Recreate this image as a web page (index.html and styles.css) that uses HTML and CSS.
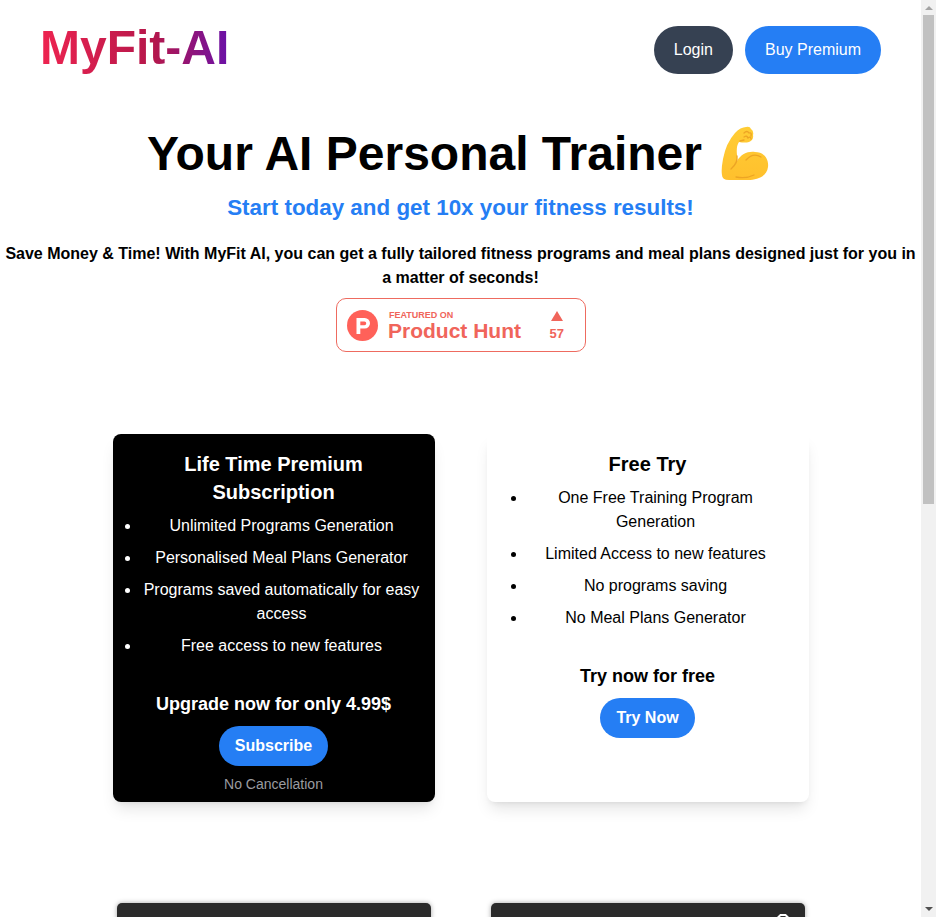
FILE: index.html
```html
<!DOCTYPE html>
<html lang="en">
<head>
<meta charset="utf-8">
<title>MyFit-AI</title>
<link rel="stylesheet" href="styles.css">
</head>
<body>
<div class="page">
  <header class="header">
    <div class="logo">MyFit-AI</div>
    <nav class="nav">
      <a class="pill pill-dark">Login</a>
      <a class="pill">Buy Premium</a>
    </nav>
  </header>
  <section class="hero">
    <h1><span>Your AI Personal Trainer</span>
      <svg class="muscle" viewBox="0 0 48 56" role="img" aria-label="Flexed biceps">
        <defs><linearGradient id="skin" x1="0" y1="0" x2="0" y2="1"><stop offset="0" stop-color="#ffcd35"/><stop offset="1" stop-color="#ffc02d"/></linearGradient></defs>
        <path fill="url(#skin)" d="M14 7C17 3 22 1 25 1Q29 0 30 3Q33 5 32 9Q33 14 28 16Q24 17 18 16Q15 20 16 29L16 35C20 28 27 25 34 26C43 26 48 33 47 41C46 50 37 54 27 54L8 54Q1 54 1 49Q0 44 2 33Q5 17 14 7Z"/>
        <path fill="none" stroke="#eda524" stroke-width="1.3" stroke-linecap="round" d="M23 7Q26 4 28 7Q31 6 30 10M23 11Q26 9 27 12Q30 10 30 13M19 15L23 14M16 30Q17 37 10 43M25 34Q32 26 40 31M15 51Q25 53 33 49"/>
      </svg>
    </h1>
    <h2>Start today and get 10x your fitness results!</h2>
    <p>Save Money &amp; Time! With MyFit AI, you can get a fully tailored fitness programs and meal plans designed just for you in a matter of seconds!</p>
    <a class="badge">
      <svg class="ph" viewBox="0 0 31 31"><circle cx="15.5" cy="15.5" r="15.5" fill="#ff6159"/><path fill="#fff" fill-rule="evenodd" d="M9.5 8h8.2a5.3 5.3 0 0 1 0 10.6h-4.4V24H9.5zm3.8 3.5v3.7h4.1a1.85 1.85 0 0 0 0-3.7z"/></svg>
      <span class="badge-text"><small>FEATURED ON</small><strong>Product Hunt</strong></span>
      <span class="votes"><i></i>57</span>
    </a>
  </section>
  <section class="plans">
    <article class="plan premium">
      <h3>Life Time Premium Subscription</h3>
      <ul>
        <li>Unlimited Programs Generation</li>
        <li>Personalised Meal Plans Generator</li>
        <li>Programs saved automatically for easy access</li>
        <li>Free access to new features</li>
      </ul>
      <h4>Upgrade now for only 4.99$</h4>
      <a class="action">Subscribe</a>
      <small class="note">No Cancellation</small>
    </article>
    <article class="plan free">
      <h3>Free Try</h3>
      <ul>
        <li>One Free Training Program Generation</li>
        <li>Limited Access to new features</li>
        <li>No programs saving</li>
        <li>No Meal Plans Generator</li>
      </ul>
      <h4>Try now for free</h4>
      <a class="action">Try Now</a>
    </article>
  </section>
  <section class="previews">
    <div class="preview"></div>
    <div class="preview">
      <svg viewBox="0 0 24 24" fill="none" stroke="#fff" stroke-width="2"><path d="M4 8.5L7 5.5L9.500 3H14.500L17 5.500L20 8.500V18H4z"/></svg>
    </div>
  </section>
</div>
<div class="scrollbar"><i class="up"></i><div class="thumb"></div><i class="down"></i></div>
</body>
</html>
```
FILE: styles.css
```css
* { box-sizing: border-box; }
body {
  margin: 0;
  height: 917px;
  overflow: hidden;
  display: flex;
  background: #fff;
  color: #000;
  font: 16px/24px "Liberation Sans", Arial, sans-serif;
}
h1, h2, h3, h4, p, ul { margin: 0; padding: 0; }
.page { width: 921px; height: 917px; overflow: hidden; }
.header {
  display: flex;
  justify-content: space-between;
  height: 100px;
  padding: 20px 40px 0;
}
.logo {
  height: 60px;
  font-size: 48px;
  line-height: 56px;
  font-weight: 700;
  color: transparent;
  background: linear-gradient(to right, #ee2450, #b5174b 60%, #6a11a8);
  -webkit-background-clip: text;
  background-clip: text;
}
.nav { display: flex; gap: 12px; padding-top: 6px; }
.pill {
  height: 48px;
  padding: 0 20px;
  line-height: 47px;
  border-radius: 24px;
  background: #257ef4;
  color: #fff;
}
.pill-dark { background: #364152; }
.hero { display: flex; flex-direction: column; align-items: center; text-align: center; }
h1 {
  display: flex;
  justify-content: center;
  gap: 19px;
  height: 92px;
  padding: 26px 5px 0 0;
  font-size: 48px;
  line-height: 56px;
}
.muscle { width: 48px; height: 56px; }
h2 { height: 50px; font-size: 22.4px; line-height: 32px; color: #257ef4; }
.hero p { width: 921px; font-weight: 700; }
.badge {
  display: flex;
  align-items: center;
  width: 250px;
  height: 54px;
  margin-top: 8px;
  padding-left: 10px;
  border: 1px solid #ee6b60;
  border-radius: 10px;
  color: #f0655b;
  text-align: left;
}
.ph { width: 31px; height: 31px; }
.badge-text { display: flex; flex-direction: column; width: 134px; margin-left: 10.5px; }
.badge-text small { font-size: 9px; line-height: 10px; font-weight: 700; padding: 1px 0 0 1px; }
.badge-text strong { font-size: 21px; line-height: 22px; white-space: nowrap; }
.votes {
  display: flex;
  flex-direction: column;
  align-items: center;
  margin-left: 27.5px;
  padding-top: 1px;
  font-size: 13px;
  line-height: 14px;
  font-weight: 700;
}
.votes i {
  margin-bottom: 6px;
  border: 6px solid transparent;
  border-top: 0;
  border-bottom: 10px solid #f0655b;
}
.plans { display: flex; justify-content: center; gap: 52px; margin-top: 82px; }
.plan {
  width: 322px;
  height: 368px;
  padding-top: 16px;
  display: flex;
  flex-direction: column;
  align-items: center;
  text-align: center;
  border-radius: 8px;
  box-shadow: 0 10px 15px -3px rgba(0,0,0,.1), 0 4px 6px -4px rgba(0,0,0,.1);
}
.premium { background: #000; color: #fff; padding-left: 12px; padding-right: 12px; }
.free { padding-left: 24px; padding-right: 24px; }
.plan h3 { padding: 0 24px; margin-bottom: 8px; font-size: 20px; line-height: 28px; }
.plan ul { align-self: stretch; margin: 0 0 24px 16px; }
.plan li { margin-bottom: 8px; }
.plan h4 { font-size: 18px; line-height: 28px; margin-bottom: 8px; }
.action {
  height: 40px;
  padding: 0 16px;
  border-radius: 20px;
  background: #257ef4;
  color: #fff;
  font-weight: 700;
  line-height: 40px;
}
.note { margin-top: 8px; font-size: 14px; line-height: 20px; color: #9a9ca0; }
.previews { display: flex; justify-content: center; gap: 60px; margin-top: 101px; }
.preview {
  display: flex;
  justify-content: flex-end;
  width: 314px;
  height: 200px;
  padding: 9px 10px;
  border-radius: 5px;
  background: #2b2b2b;
  box-shadow: 0 0 5px rgba(0,0,0,.35);
}
.preview svg { width: 24px; height: 24px; }
.scrollbar {
  display: flex;
  flex-direction: column;
  align-items: center;
  width: 15px;
  height: 917px;
  background: #f1f1f1;
}
.thumb { width: 11px; height: 489px; background: #c1c1c1; }
.up { margin: 6px 0 5px; border: 4px solid transparent; border-top: 0; border-bottom-color: #a3a3a3; }
.down { margin: auto 0 6px; border: 4px solid transparent; border-bottom: 0; border-top-color: #505050; }
```
